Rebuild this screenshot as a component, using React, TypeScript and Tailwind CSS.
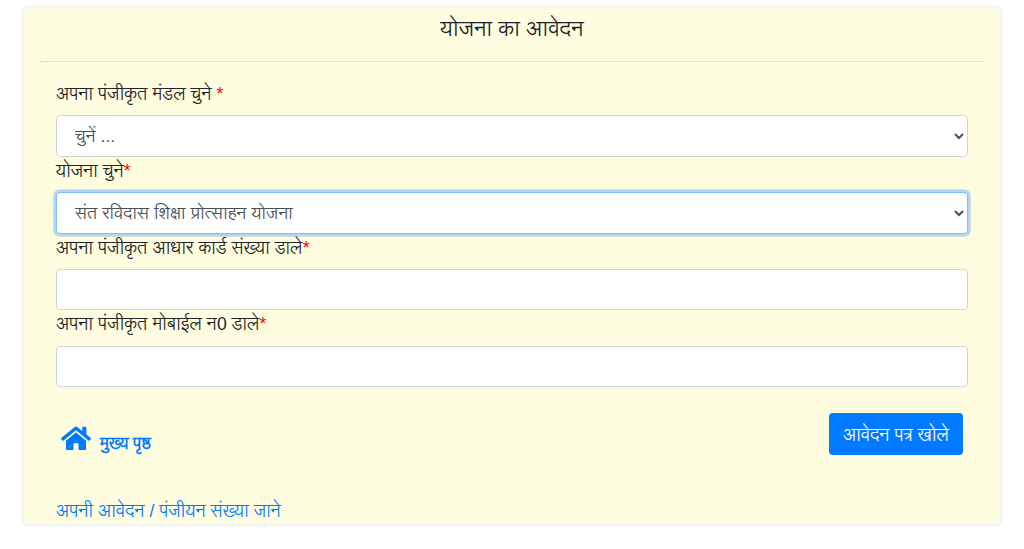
import { FaHome } from "react-icons/fa"

const labelClass = "block pt-[2px] text-[17.6px] leading-[24.4px] text-[#212529]"
const baseControl =
  "mt-[8.8px] block w-full h-[41.6px] rounded border bg-white px-[14px] text-[17.4px] text-[#495057]"
const controlClass = `${baseControl} border-[#ced4da]`
const focusedClass = `${baseControl} border-[#80bdff] shadow-[0_0_0_2px_#b0d6f4,0_0_0_3px_#cfe3e0] outline-none`

function Required() {
  return <span className="text-[#ff0000]">*</span>
}

export default function App() {
  return (
    <div className="min-h-[549px] bg-white px-6 pt-2 font-['Liberation_Sans','Lohit_Devanagari',sans-serif]">
      <div className="h-[516px] overflow-hidden bg-[#fffde0] px-4 shadow-[0_0_6px_rgba(0,0,0,0.12)]">
        <h4 className="h-[54px] border-b border-dotted border-[#c4c4b4] pt-[5px] text-center text-[21.8px] leading-[32px] text-[#212529]">
          योजना का आवेदन
        </h4>
        <form className="px-4 pt-[18px]">
          <label className={labelClass}>
            अपना पंजीकृत मंडल चुने <Required />
          </label>
          <select className={controlClass} defaultValue="">
            <option value="">चुनें ...</option>
          </select>

          <label className={labelClass}>
            योजना चुने
            <Required />
          </label>
          <select className={focusedClass}>
            <option>संत रविदास शिक्षा प्रोत्साहन योजना</option>
          </select>

          <label className={labelClass}>
            अपना पंजीकृत आधार कार्ड संख्या डाले
            <Required />
          </label>
          <input className={controlClass} type="text" />

          <label className={labelClass}>
            अपना पंजीकृत मोबाईल न0 डाले
            <Required />
          </label>
          <input className={controlClass} type="text" />

          <div className="mt-[26px] flex items-start justify-between pr-[5px]">
            <a className="flex items-center gap-[9px] pl-[5px] pt-[7px] font-bold text-[#007bff]" href="#">
              <FaHome className="h-[26.7px] w-[30px]" />
              <span className="mt-[12px] text-[16px] leading-[24px]">मुख्य पृष्ठ</span>
            </a>
            <button type="button" className="h-[42px] rounded bg-[#007bff] px-[14px] pt-[2px] text-[17.6px] text-white">
              आवेदन पत्र खोले
            </button>
          </div>

          <a className="mt-[42px] block text-[17.6px] leading-[26.4px] text-[#007bff]" href="#">
            अपनी आवेदन / पंजीयन संख्या जाने
          </a>
        </form>
      </div>
    </div>
  )
}
